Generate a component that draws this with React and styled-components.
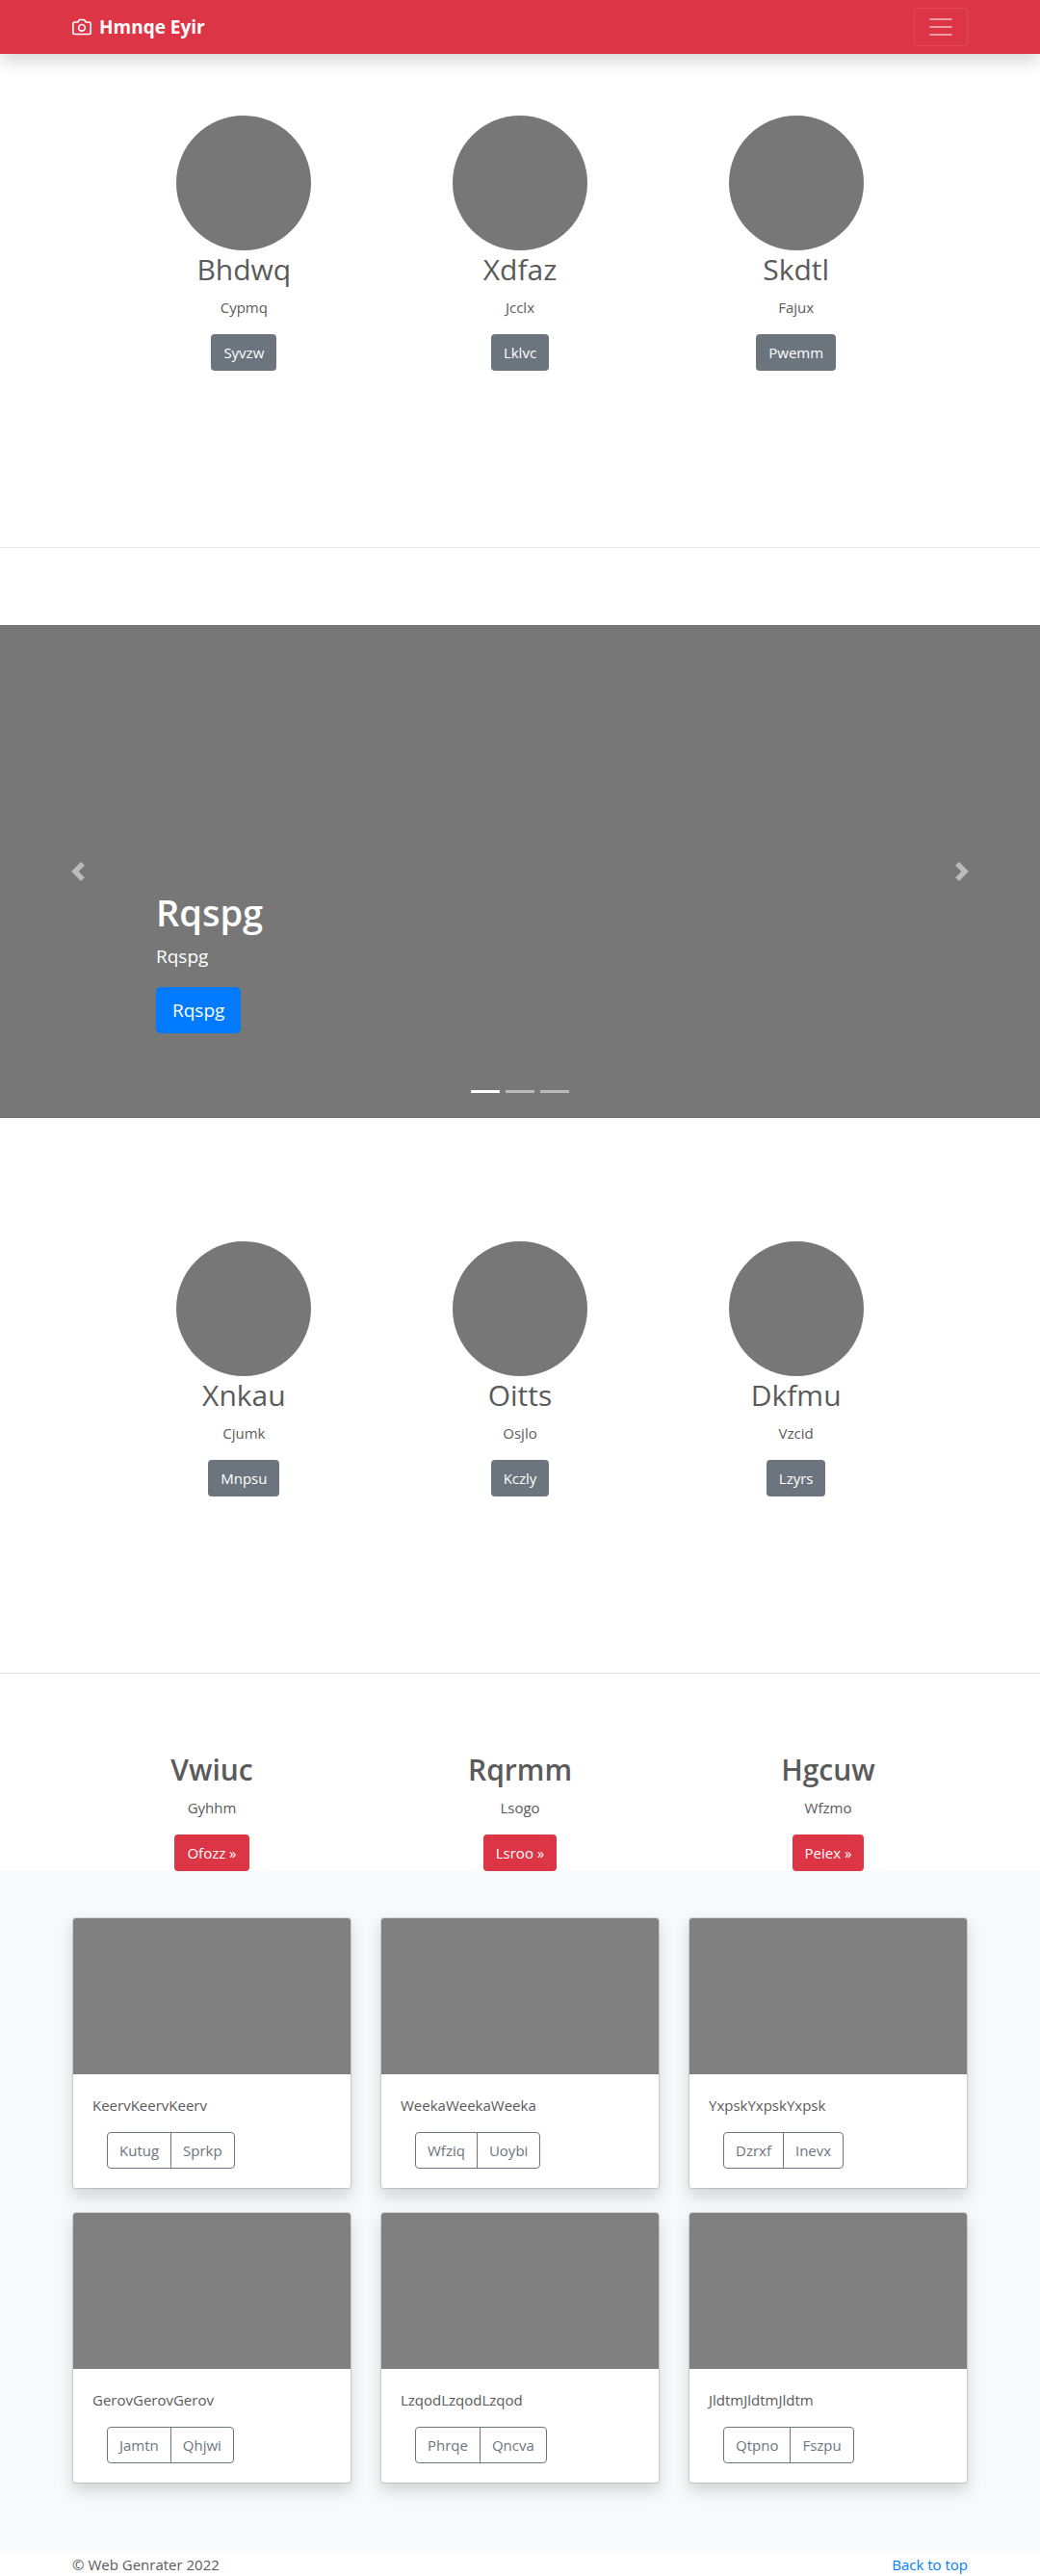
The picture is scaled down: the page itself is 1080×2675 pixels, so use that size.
import React from 'react';
import styled, { createGlobalStyle, css } from 'styled-components';

const GlobalStyle = createGlobalStyle`
  *, *::before, *::after { box-sizing: border-box; }
  body {
    margin: 0;
    background: #fff;
    color: #5a5a5a;
    font-family: "Open Sans", "Noto Sans", sans-serif;
    font-size: 15px;
    line-height: 24px;
  }
  h1, h2, p { margin: 0; }
  a { text-decoration: none; }
`;

const Container = styled.div`
  width: 100%;
  max-width: 960px;
  margin: 0 auto;
  padding: 0 15px;
`;

const Header = styled.header`
  position: relative;
  background: #dc3545;
  box-shadow: 0 8px 16px rgba(0, 0, 0, 0.15);
`;

const Bar = styled(Container)`
  display: flex;
  align-items: center;
  justify-content: space-between;
  padding-top: 8px;
  padding-bottom: 8px;
`;

const Brand = styled.a`
  display: flex;
  align-items: center;
  gap: 8px;
  color: #fff;
  font-size: 19px;
  font-weight: 700;
  line-height: 30px;
`;

const Toggler = styled.button`
  display: flex;
  padding: 4px 12px;
  border: 1px solid rgba(255, 255, 255, 0.1);
  border-radius: 4px;
  background: transparent;
  color: rgba(255, 255, 255, 0.5);
`;

const Button = styled.a`
  display: inline-block;
  padding: 6px 12px;
  border: 1px solid transparent;
  border-radius: 4px;
  background: ${(p) => p.$color};
  color: #fff;
  ${(p) =>
    p.$large &&
    css`
      padding: 8px 16px;
      border-radius: 5px;
      font-size: 19px;
      line-height: 30px;
    `}
`;

const Columns = styled.div`
  display: grid;
  grid-template-columns: repeat(3, 1fr);
  max-width: ${(p) => p.$width}px;
  margin: 0 auto;
`;

const Marketing = styled.section`
  padding-top: ${(p) => p.$top}px;
  padding-bottom: 103px;
`;

const Column = styled.div`
  display: flex;
  flex-direction: column;
  align-items: center;
  text-align: center;
`;

const Circle = styled.div`
  width: 140px;
  height: 140px;
  border-radius: 50%;
  background: #777;
`;

const Title = styled.h2`
  margin-bottom: 8px;
  font-size: 30px;
  font-weight: ${(p) => p.$weight};
  line-height: 39px;
`;

const Copy = styled.p`
  margin-bottom: 16px;
`;

const Divider = styled.hr`
  margin: 80px 0;
  border: 0;
  border-top: 1px solid rgba(0, 0, 0, 0.1);
`;

const Carousel = styled.section`
  display: grid;
  grid-template-columns: 15% 1fr 15%;
  grid-template-rows: 1fr auto;
  height: 512px;
  background: #777;
  color: #fff;
`;

const Arrow = styled.button`
  grid-row: 1 / 3;
  grid-column: ${(p) => p.$column};
  display: flex;
  align-items: center;
  justify-content: center;
  padding: 0;
  border: 0;
  background: none;
  color: #fff;
  opacity: 0.5;
`;

const Caption = styled.div`
  grid-column: 2;
  align-self: end;
  padding-bottom: 59px;
`;

const CaptionTitle = styled.h1`
  margin-bottom: 8px;
  font-size: 38px;
  font-weight: 600;
  line-height: 48px;
`;

const CaptionCopy = styled.p`
  margin-bottom: 18px;
  font-size: 19px;
  line-height: 28px;
`;

const Indicators = styled.div`
  grid-column: 2;
  display: flex;
  justify-content: center;
  gap: 6px;
  padding-bottom: 26px;
`;

const Indicator = styled.button`
  width: 30px;
  height: 3px;
  padding: 0;
  border: 0;
  background: #fff;
  opacity: ${(p) => (p.$active ? 1 : 0.5)};
`;

const Album = styled.section`
  padding: 48px 0 72px;
  background: #f8f9fa;
`;

const CardGrid = styled.div`
  display: grid;
  grid-template-columns: repeat(3, 1fr);
  gap: 24px 30px;
`;

const Card = styled.article`
  border: 1px solid rgba(0, 0, 0, 0.125);
  border-radius: 4px;
  background: #fff;
  background-clip: padding-box;
  box-shadow: 0 8px 16px rgba(0, 0, 0, 0.15);
`;

const Thumb = styled.div`
  aspect-ratio: 16 / 9;
  border-radius: 3px 3px 0 0;
  background: #808080;
`;

const CardBody = styled.div`
  padding: 20px;
`;

const ButtonGroup = styled.div`
  display: flex;
  padding-left: 15px;
`;

const OutlineButton = styled.button`
  padding: 6px 12px;
  border: 1px solid #6c757d;
  background: transparent;
  color: #6c757d;
  font: inherit;
  &:first-child {
    border-radius: 4px 0 0 4px;
  }
  &:last-child {
    margin-left: -1px;
    border-radius: 0 4px 4px 0;
  }
`;

const Footer = styled(Container)`
  display: flex;
  justify-content: space-between;
`;

const TopLink = styled.a`
  color: #007bff;
`;

const CameraIcon = () => (
  <svg width="20" height="20" viewBox="0 0 24 24" fill="none" stroke="currentColor" strokeWidth="2" strokeLinecap="round" strokeLinejoin="round" aria-hidden="true">
    <path d="M23 19a2 2 0 0 1-2 2H3a2 2 0 0 1-2-2V8a2 2 0 0 1 2-2h4l2-3h6l2 3h4a2 2 0 0 1 2 2z" />
    <circle cx="12" cy="13" r="4" />
  </svg>
);

const MenuIcon = () => (
  <svg width="30" height="30" viewBox="0 0 30 30" stroke="currentColor" strokeWidth="2" strokeLinecap="round" aria-hidden="true">
    <path d="M4 7h22M4 15h22M4 23h22" />
  </svg>
);

const Chevron = ({ d }) => (
  <svg width="20" height="20" viewBox="0 0 8 8" fill="currentColor" aria-hidden="true">
    <path d={d} />
  </svg>
);

const PREV = 'M5.25 0l-4 4 4 4 1.5-1.5L4.25 4l2.5-2.5L5.25 0z';
const NEXT = 'M2.75 0l-1.5 1.5L3.75 4l-2.5 2.5L2.75 8l4-4-4-4z';

const people = [
  ['Bhdwq', 'Cypmq', 'Syvzw'],
  ['Xdfaz', 'Jcclx', 'Lklvc'],
  ['Skdtl', 'Fajux', 'Pwemm'],
];
const morePeople = [
  ['Xnkau', 'Cjumk', 'Mnpsu'],
  ['Oitts', 'Osjlo', 'Kczly'],
  ['Dkfmu', 'Vzcid', 'Lzyrs'],
];
const features = [
  ['Vwiuc', 'Gyhhm', 'Ofozz »'],
  ['Rqrmm', 'Lsogo', 'Lsroo »'],
  ['Hgcuw', 'Wfzmo', 'Peiex »'],
];
const cards = [
  ['KeervKeervKeerv', 'Kutug', 'Sprkp'],
  ['WeekaWeekaWeeka', 'Wfziq', 'Uoybi'],
  ['YxpskYxpskYxpsk', 'Dzrxf', 'Inevx'],
  ['GerovGerovGerov', 'Jamtn', 'Qhjwi'],
  ['LzqodLzqodLzqod', 'Phrqe', 'Qncva'],
  ['JldtmJldtmJldtm', 'Qtpno', 'Fszpu'],
];

const People = ({ items, top }) => (
  <Marketing $top={top}>
    <Columns $width={860}>
      {items.map(([title, copy, action]) => (
        <Column key={title}>
          <Circle />
          <Title $weight={400}>{title}</Title>
          <Copy>{copy}</Copy>
          <Button href="#" $color="#6c757d">{action}</Button>
        </Column>
      ))}
    </Columns>
  </Marketing>
);

export default function App() {
  return (
    <>
      <GlobalStyle />
      <Header id="top">
        <Bar>
          <Brand href="#">
            <CameraIcon />
            Hmnqe Eyir
          </Brand>
          <Toggler type="button" aria-label="Toggle navigation">
            <MenuIcon />
          </Toggler>
        </Bar>
      </Header>
      <main>
        <People items={people} top={64} />
        <Divider />
        <Carousel>
          <Arrow type="button" $column={1} aria-label="Previous">
            <Chevron d={PREV} />
          </Arrow>
          <Caption>
            <CaptionTitle>Rqspg</CaptionTitle>
            <CaptionCopy>Rqspg</CaptionCopy>
            <Button href="#" $color="#007bff" $large>Rqspg</Button>
          </Caption>
          <Arrow type="button" $column={3} aria-label="Next">
            <Chevron d={NEXT} />
          </Arrow>
          <Indicators>
            <Indicator type="button" $active aria-label="Slide 1" />
            <Indicator type="button" aria-label="Slide 2" />
            <Indicator type="button" aria-label="Slide 3" />
          </Indicators>
        </Carousel>
        <People items={morePeople} top={128} />
        <Divider />
        <Columns $width={960}>
          {features.map(([title, copy, action]) => (
            <Column key={title}>
              <Title $weight={600}>{title}</Title>
              <Copy>{copy}</Copy>
              <Button href="#" $color="#dc3545">{action}</Button>
            </Column>
          ))}
        </Columns>
        <Album>
          <Container>
            <CardGrid>
              {cards.map(([text, first, second]) => (
                <Card key={text}>
                  <Thumb />
                  <CardBody>
                    <Copy>{text}</Copy>
                    <ButtonGroup>
                      <OutlineButton type="button">{first}</OutlineButton>
                      <OutlineButton type="button">{second}</OutlineButton>
                    </ButtonGroup>
                  </CardBody>
                </Card>
              ))}
            </CardGrid>
          </Container>
        </Album>
      </main>
      <Footer as="footer">
        <p>© Web Genrater 2022</p>
        <TopLink href="#top">Back to top</TopLink>
      </Footer>
    </>
  );
}
